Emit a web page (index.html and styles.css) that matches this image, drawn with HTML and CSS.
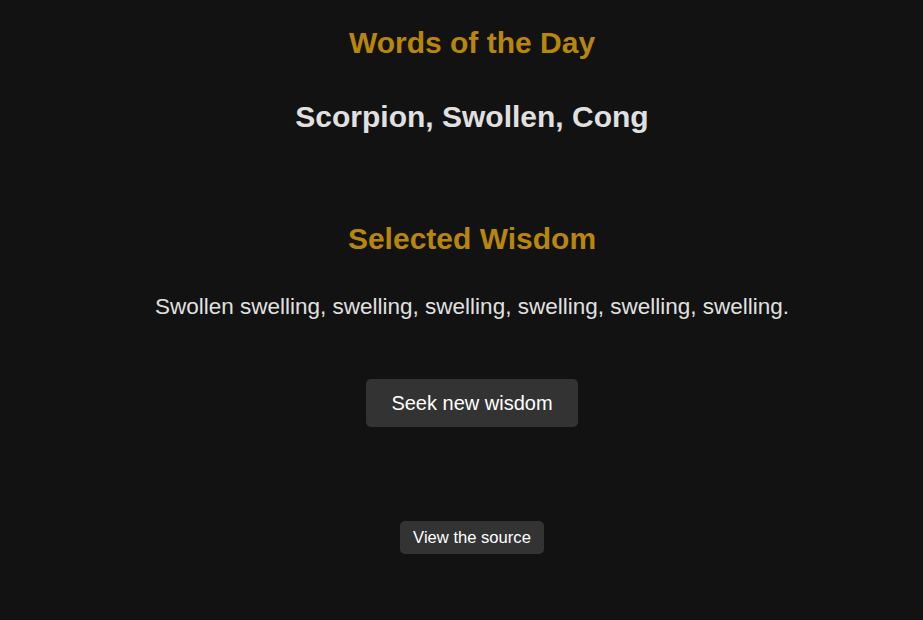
FILE: index.html
```html
<!DOCTYPE html>
<html lang="en">
<head>
    <meta charset="UTF-8">
    <meta name="viewport" content="width=device-width, initial-scale=1.0">
    <title>Words of the Day</title>
    <link rel="stylesheet" href="styles.css">
</head>
<body>
    <main class="page">
        <section class="words">
            <h1 class="title">Words of the Day</h1>
            <h2 class="word-list">Scorpion, Swollen, Cong</h2>
        </section>

        <section class="wisdom">
            <h2 class="title">Selected Wisdom</h2>
            <p class="quote">Swollen swelling, swelling, swelling, swelling, swelling, swelling.</p>
            <button type="button" class="seek">Seek new wisdom</button>
        </section>

        <footer class="footer">
            <a class="source" href="#">View the source</a>
        </footer>
    </main>
</body>
</html>
```

FILE: styles.css
```css
body {
    margin: 0;
    background-color: #121212;
    color: #e0e0e0;
    font-family: "Liberation Sans", Arial, sans-serif;
}

.page {
    display: flex;
    flex-direction: column;
    align-items: center;
    text-align: center;
    padding: 26px 0 0 21px;
}

.title {
    font-size: 30px;
    font-weight: bold;
    color: #b8860b;
    margin: 0;
}

.word-list {
    font-size: 30px;
    font-weight: bold;
    color: #e0e0e0;
    margin: 40px 0 0;
}

.wisdom {
    display: flex;
    flex-direction: column;
    align-items: center;
    margin-top: 88px;
}

.quote {
    font-size: 22.5px;
    margin: 38px 0 0;
}

.seek {
    margin-top: 59px;
    background-color: #333;
    color: #fff;
    border: none;
    border-radius: 5px;
    padding: 12.5px 25px;
    font-family: inherit;
    font-size: 20px;
    cursor: pointer;
}

.seek:hover {
    background-color: #444;
}

.footer {
    margin-top: 94px;
}

.source {
    display: inline-block;
    background-color: #333;
    color: #fff;
    text-decoration: none;
    border-radius: 5px;
    padding: 6.5px 13px;
    font-size: 16.6px;
}
```
